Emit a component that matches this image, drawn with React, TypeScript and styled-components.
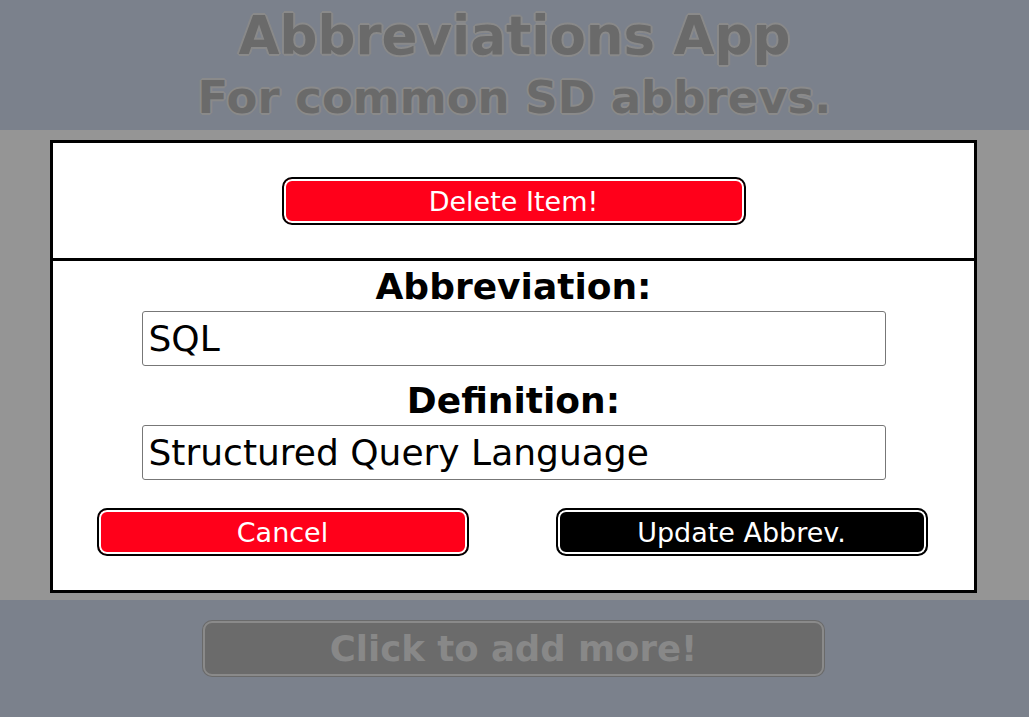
import React from "react";
import styled, { createGlobalStyle } from "styled-components";

const Global = createGlobalStyle`
  html, body { margin: 0; padding: 0; }
  body {
    font-family: "DejaVu Sans", Verdana, sans-serif;
    background: #959595;
    width: 1029px;
    height: 717px;
    overflow: hidden;
  }
`;

const Page = styled.div`
  display: flex;
  flex-direction: column;
  height: 717px;
`;

const outline = `
  1px 0 0 #8a8a8a, -1px 0 0 #8a8a8a, 0 1px 0 #8a8a8a, 0 -1px 0 #8a8a8a,
  1px 1px 0 #8a8a8a, -1px -1px 0 #8a8a8a, 1px -1px 0 #8a8a8a, -1px 1px 0 #8a8a8a,
  2px 0 0 #8a8a8a, -2px 0 0 #8a8a8a, 0 2px 0 #8a8a8a, 0 -2px 0 #8a8a8a
`;

const Header = styled.header`
  height: 130px;
  background: #7b818c;
  display: flex;
  flex-direction: column;
  align-items: center;
  padding-top: 5px;
  box-sizing: border-box;
`;

const Title = styled.h1`
  margin: 0;
  font-size: 53px;
  line-height: 62px;
  font-weight: bold;
  color: #6a6a6a;
  text-shadow: ${outline};
`;

const Subtitle = styled.h2`
  margin: 0;
  font-size: 45px;
  line-height: 62px;
  font-weight: bold;
  color: #6a6a6a;
  text-shadow: ${outline};
`;

const Overlay = styled.main`
  height: 470px;
  background: #959595;
  padding: 10px 52px 0 50px;
  box-sizing: border-box;
`;

const Modal = styled.section`
  background: #fff;
  border: 3px solid #000;
  height: 453px;
  box-sizing: border-box;
  display: flex;
  flex-direction: column;
`;

const TopSection = styled.div`
  display: flex;
  justify-content: center;
  padding: 34px 0 33px;
  border-bottom: 3px solid #000;
`;

const Button = styled.button<{ $tone: "red" | "black"; $w: number }>`
  width: ${(p) => p.$w}px;
  height: 48px;
  box-sizing: border-box;
  border: 2px solid #000;
  border-radius: 10px;
  box-shadow: inset 0 0 0 2px #fff;
  background: ${(p) => (p.$tone === "red" ? "#ff001a" : "#000")};
  color: #fff;
  font-family: "DejaVu Sans", Verdana, sans-serif;
  font-size: 27px;
  padding: 0;
  cursor: pointer;
`;

const Form = styled.div`
  display: flex;
  flex-direction: column;
  align-items: center;
  padding-top: 6px;
`;

const Label = styled.label<{ $gap: number }>`
  font-size: 36px;
  line-height: 40px;
  font-weight: bold;
  color: #000;
  margin-top: ${(p) => p.$gap}px;
`;

const Input = styled.input`
  width: 744px;
  height: 55px;
  box-sizing: border-box;
  border: 1px solid #777;
  border-radius: 3px;
  margin-top: 4px;
  padding: 0 6px;
  font-family: "DejaVu Sans", Verdana, sans-serif;
  font-size: 36px;
  color: #000;
  outline: none;
`;

const Actions = styled.div`
  display: flex;
  justify-content: space-around;
  margin-top: 28px;
  padding-right: 3px;
`;

const Footer = styled.footer`
  flex: 1;
  background: #7b818c;
  display: flex;
  justify-content: center;
  padding: 21px 2px 0 0;
  box-sizing: border-box;
`;

const AddButton = styled.button`
  width: 621px;
  height: 55px;
  box-sizing: border-box;
  background: #6b6b6b;
  border: 2px solid #8a8a8a;
  border-radius: 9px;
  box-shadow: 0 0 0 1px #6a6a6a;
  color: #888;
  font-family: "DejaVu Sans", Verdana, sans-serif;
  font-size: 35.5px;
  font-weight: bold;
  padding: 0;
`;

export default function App() {
  return (
    <Page>
      <Global />
      <Header>
        <Title>Abbreviations App</Title>
        <Subtitle>For common SD abbrevs.</Subtitle>
      </Header>
      <Overlay>
        <Modal>
          <TopSection>
            <Button $tone="red" $w={464}>Delete Item!</Button>
          </TopSection>
          <Form>
            <Label $gap={0}>Abbreviation:</Label>
            <Input defaultValue="SQL" />
            <Label $gap={15}>Definition:</Label>
            <Input defaultValue="Structured Query Language" />
          </Form>
          <Actions>
            <Button $tone="red" $w={372}>Cancel</Button>
            <Button $tone="black" $w={372}>Update Abbrev.</Button>
          </Actions>
        </Modal>
      </Overlay>
      <Footer>
        <AddButton>Click to add more!</AddButton>
      </Footer>
    </Page>
  );
}
